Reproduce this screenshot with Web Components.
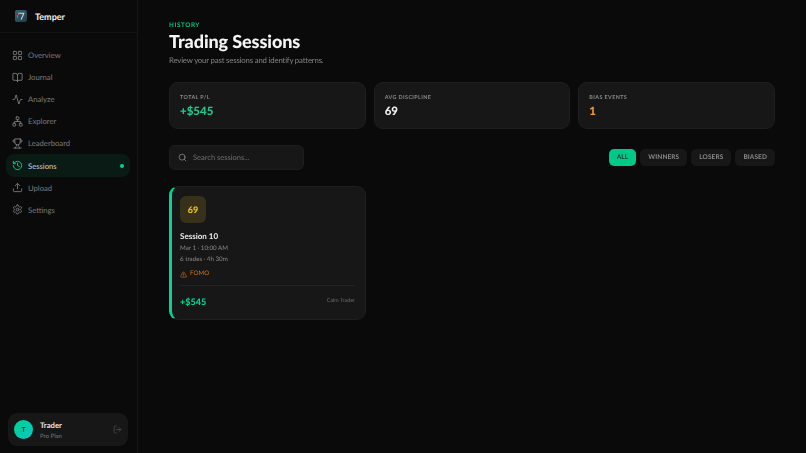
<!DOCTYPE html>
<html><head><meta charset="utf-8"><style>
html,body{margin:0;height:100%;background:#0a0a0a}
body{font-family:"Lato","Noto Sans",sans-serif;overflow:hidden;text-rendering:geometricPrecision;-webkit-font-smoothing:antialiased}
</style></head><body>
<app-shell>
  <side-bar slot="side"></side-bar>
  <main-view></main-view>
</app-shell>
<script>
const ic=(p,s=12)=>`<svg width="${s}" height="${s}" viewBox="0 0 24 24" fill="none" stroke="currentColor" stroke-width="2" stroke-linecap="round" stroke-linejoin="round">${p}</svg>`;
const I={
grid:'<rect x="3" y="3" width="7" height="7" rx="1.5"/><rect x="14" y="3" width="7" height="7" rx="1.5"/><rect x="3" y="14" width="7" height="7" rx="1.5"/><rect x="14" y="14" width="7" height="7" rx="1.5"/>',
book:'<path d="M12 7v14"/><path d="M3 18a1 1 0 0 1-1-1V4a1 1 0 0 1 1-1h5a4 4 0 0 1 4 4 4 4 0 0 1 4-4h5a1 1 0 0 1 1 1v13a1 1 0 0 1-1 1h-6a3 3 0 0 0-3 3 3 3 0 0 0-3-3z"/>',
pulse:'<path d="M22 12h-2.48a2 2 0 0 0-1.93 1.46l-2.35 8.36a.25.25 0 0 1-.48 0L9.24 2.18a.25.25 0 0 0-.48 0l-2.35 8.36A2 2 0 0 1 4.49 12H2"/>',
net:'<rect x="16" y="16" width="6" height="6" rx="1"/><rect x="2" y="16" width="6" height="6" rx="1"/><rect x="9" y="2" width="6" height="6" rx="1"/><path d="M5 16v-3a1 1 0 0 1 1-1h12a1 1 0 0 1 1 1v3"/><path d="M12 12V8"/>',
trophy:'<path d="M6 9H4.5a2.5 2.5 0 0 1 0-5H6"/><path d="M18 9h1.5a2.5 2.5 0 0 0 0-5H18"/><path d="M4 22h16"/><path d="M10 14.66V17c0 .55-.47.98-.97 1.21C7.85 18.75 7 20.24 7 22"/><path d="M14 14.66V17c0 .55.47.98.97 1.21C16.15 18.75 17 20.24 17 22"/><path d="M18 2H6v7a6 6 0 0 0 12 0V2Z"/>',
history:'<path d="M3 12a9 9 0 1 0 9-9 9.75 9.75 0 0 0-6.74 2.74L3 8"/><path d="M3 3v5h5"/><path d="M12 7v5l4 2"/>',
upload:'<path d="M21 15v4a2 2 0 0 1-2 2H5a2 2 0 0 1-2-2v-4"/><polyline points="17 8 12 3 7 8"/><line x1="12" y1="3" x2="12" y2="15"/>',
gear:'<path d="M12.22 2h-.44a2 2 0 0 0-2 2v.18a2 2 0 0 1-1 1.73l-.43.25a2 2 0 0 1-2 0l-.15-.08a2 2 0 0 0-2.73.73l-.22.38a2 2 0 0 0 .73 2.73l.15.1a2 2 0 0 1 1 1.72v.51a2 2 0 0 1-1 1.74l-.15.09a2 2 0 0 0-.73 2.73l.22.38a2 2 0 0 0 2.73.73l.15-.08a2 2 0 0 1 2 0l.43.25a2 2 0 0 1 1 1.73V20a2 2 0 0 0 2 2h.44a2 2 0 0 0 2-2v-.18a2 2 0 0 1 1-1.73l.43-.25a2 2 0 0 1 2 0l.15.08a2 2 0 0 0 2.73-.73l.22-.39a2 2 0 0 0-.73-2.73l-.15-.08a2 2 0 0 1-1-1.74v-.5a2 2 0 0 1 1-1.74l.15-.09a2 2 0 0 0 .73-2.73l-.22-.38a2 2 0 0 0-2.73-.73l-.15.08a2 2 0 0 1-2 0l-.43-.25a2 2 0 0 1-1-1.73V4a2 2 0 0 0-2-2z"/><circle cx="12" cy="12" r="3"/>',
logout:'<path d="M9 21H5a2 2 0 0 1-2-2V5a2 2 0 0 1 2-2h4"/><polyline points="16 17 21 12 16 7"/><line x1="21" y1="12" x2="9" y2="12"/>',
search:'<circle cx="11" cy="11" r="8"/><path d="m21 21-4.3-4.3"/>',
warn:'<path d="m21.73 18-8-14a2 2 0 0 0-3.48 0l-8 14A2 2 0 0 0 4 21h16a2 2 0 0 0 1.73-3"/><path d="M12 9v4"/><path d="M12 17h.01"/>'
};
function def(name,css,html){customElements.define(name,class extends HTMLElement{
  constructor(){super();this.attachShadow({mode:'open'})}
  connectedCallback(){const h=typeof html==='function'?html(this):html;this.shadowRoot.innerHTML=`<style>${css}</style>${h}`}
})}
def('app-shell',':host{display:flex;height:453px;width:806px;overflow:hidden;filter:blur(.3px)}','<slot name="side"></slot><slot></slot>');
def('nav-item',`:host{display:flex;align-items:center;height:22.1px;padding:0 6px 0 6px;gap:5px;margin:0;border-radius:8px;color:#7c7c7c;font-size:7.7px;box-sizing:border-box}
:host([active]){background:#0a1a14;color:#d6d6d6}
svg{flex:none;color:#7c7c7c}:host([active]) svg{color:#00d492}
span{flex:1}i{width:4px;height:4px;border-radius:50%;background:#00d492;margin-right:0}`,
 t=>`${ic(I[t.getAttribute('icon')],11)}<span><slot></slot></span>${t.hasAttribute('active')?'<i></i>':''}`);
def('side-bar',`:host{display:flex;flex-direction:column;flex:none;width:138px;height:453px;box-sizing:border-box;border-right:1px solid #161616;background:#0a0a0a}
.logo{display:flex;align-items:center;gap:8px;height:33px;padding:0 14px 0 15px;border-bottom:1px solid #141414;box-sizing:border-box;color:#f2f2f2;font-weight:700;font-size:9px}
nav{display:flex;flex-direction:column;padding:11px 7px 0 6px;flex:1}
.user{margin:0 9px 7px 8px;height:33px;padding:0 6px;background:#171717;border-radius:9px;display:flex;align-items:center;gap:7px}
.av{width:19px;height:19px;border-radius:50%;background:linear-gradient(135deg,#00d492,#0bc6c6);display:flex;align-items:center;justify-content:center;color:#0a3a34;font-size:7px;font-weight:700;flex:none}
.n{flex:1;display:flex;flex-direction:column;gap:1px;padding-top:2px}.a{font-size:7.7px;color:#e4e4e4;line-height:11px;font-weight:700}.b{font-size:6px;color:#777;line-height:9px}
.x{color:#4e4e4e;display:flex}`,
`<div class="logo"><svg width="12" height="12" viewBox="0 0 12 12"><defs><linearGradient id="lg" x1="0" y1="0" x2="1" y2="1"><stop offset="0" stop-color="#3a6470"/><stop offset="1" stop-color="#1d3f4a"/></linearGradient></defs><rect width="12" height="12" rx="2" fill="url(#lg)"/><path d="M3.4 3.2h5.4L6.2 9.6" fill="none" stroke="#cfd8dc" stroke-width="1.1"/><path d="M2.6 8a3.6 3.6 0 0 1 1.6-4.2" fill="none" stroke="#c9574f" stroke-width="1"/></svg>Temper</div>
<nav><nav-item icon="grid">Overview</nav-item><nav-item icon="book">Journal</nav-item><nav-item icon="pulse">Analyze</nav-item><nav-item icon="net">Explorer</nav-item><nav-item icon="trophy">Leaderboard</nav-item><nav-item icon="history" active>Sessions</nav-item><nav-item icon="upload">Upload</nav-item><nav-item icon="gear">Settings</nav-item></nav>
<div class="user"><div class="av">T</div><div class="n"><div class="a">Trader</div><div class="b">Pro Plan</div></div><div class="x">${ic(I.logout,9)}</div></div>`);
def('stat-card',`:host{display:flex;flex-direction:column;flex:1;height:47px;box-sizing:border-box;padding:11px 10px 0;background:#171717;border:1px solid #1f1f1f;border-radius:9px}
.l{font-size:5.4px;letter-spacing:.4px;color:#8a8a8a;font-weight:700;line-height:9px}.v{font-size:11.5px;font-weight:900;line-height:15px;margin-top:1px;color:var(--c,#f2f2f2)}`,
t=>`<div class="l">${t.getAttribute('label')}</div><div class="v"><slot></slot></div>`);
def('filter-chip',`:host{display:flex;align-items:center;height:17px;padding:0 8px;border-radius:5px;background:#171717;color:#8a8a8a;font-size:6.5px;font-weight:700;letter-spacing:.1px}
:host([on]){background:#00c887;color:#083a2a}`,'<slot></slot>');
def('session-card',`:host{display:block;width:197px;height:134px;box-sizing:border-box;background:#171717;border:1px solid #1f1f1f;border-left:3px solid #00d492;border-radius:9px;padding:9px 10px 0 8px}
.s{width:26px;height:27px;border-radius:6px;background:#37301a;color:#f0c419;font-weight:900;font-size:9px;display:flex;align-items:center;justify-content:center}
.t{font-size:8px;font-weight:700;color:#ececec;line-height:12px;margin-top:7px}
.m{font-size:6.2px;color:#8a8a8a;line-height:11px;margin-top:0}.t+.m{margin-top:1px}
.f{display:flex;align-items:center;gap:3px;color:#d9741f;font-size:6.2px;line-height:10px;margin-top:4px}
.b{display:flex;justify-content:space-between;align-items:center;border-top:1px solid #232323;margin-top:6px;padding-top:5px;height:20px}
.p{color:#00d492;font-weight:900;font-size:9px}.c{color:#6a6a6a;font-size:5.4px}`,
`<div class="s">69</div><div class="t">Session 10</div><div class="m">Mar 1 · 10:00 AM</div><div class="m">6 trades · 4h 30m</div><div class="f">${ic(I.warn,7)}FOMO</div><div class="b"><div class="p">+$545</div><div class="c">Calm Trader</div></div>`);
def('main-view',`:host{display:block;flex:1;padding:21px 31px 0 31px;box-sizing:border-box;min-width:0}
.e{font-size:6.3px;font-weight:700;letter-spacing:.6px;color:#00c887;line-height:10px}
h1{margin:0;font-size:18px;font-weight:900;color:#f5f5f5;line-height:21px;letter-spacing:-.1px}
.d{font-size:7.8px;color:#858585;line-height:12px;margin-top:2px;letter-spacing:-.18px}
.st{display:flex;gap:8px;margin-top:16px}
.r{display:flex;justify-content:space-between;align-items:center;margin-top:16px}
.q{width:135px;height:25px;box-sizing:border-box;background:#171717;border:1px solid #1e1e1e;border-radius:6px;display:flex;align-items:center;gap:6px;padding:0 8px;color:#6f6f6f;font-size:7.5px}
.q svg{color:#8d8d8d}.fs{display:flex;gap:4px}.g{margin-top:16px}`,
`<div class="e">HISTORY</div><h1>Trading Sessions</h1><div class="d">Review your past sessions and identify patterns.</div>
<div class="st"><stat-card label="TOTAL P/L" style="--c:#1fc98e">+$545</stat-card><stat-card label="AVG DISCIPLINE">69</stat-card><stat-card label="BIAS EVENTS" style="--c:#f59a23">1</stat-card></div>
<div class="r"><div class="q">${ic(I.search,9)}Search sessions...</div><div class="fs"><filter-chip on>ALL</filter-chip><filter-chip>WINNERS</filter-chip><filter-chip>LOSERS</filter-chip><filter-chip>BIASED</filter-chip></div></div>
<div class="g"><session-card></session-card></div>`);
</script></body></html>
